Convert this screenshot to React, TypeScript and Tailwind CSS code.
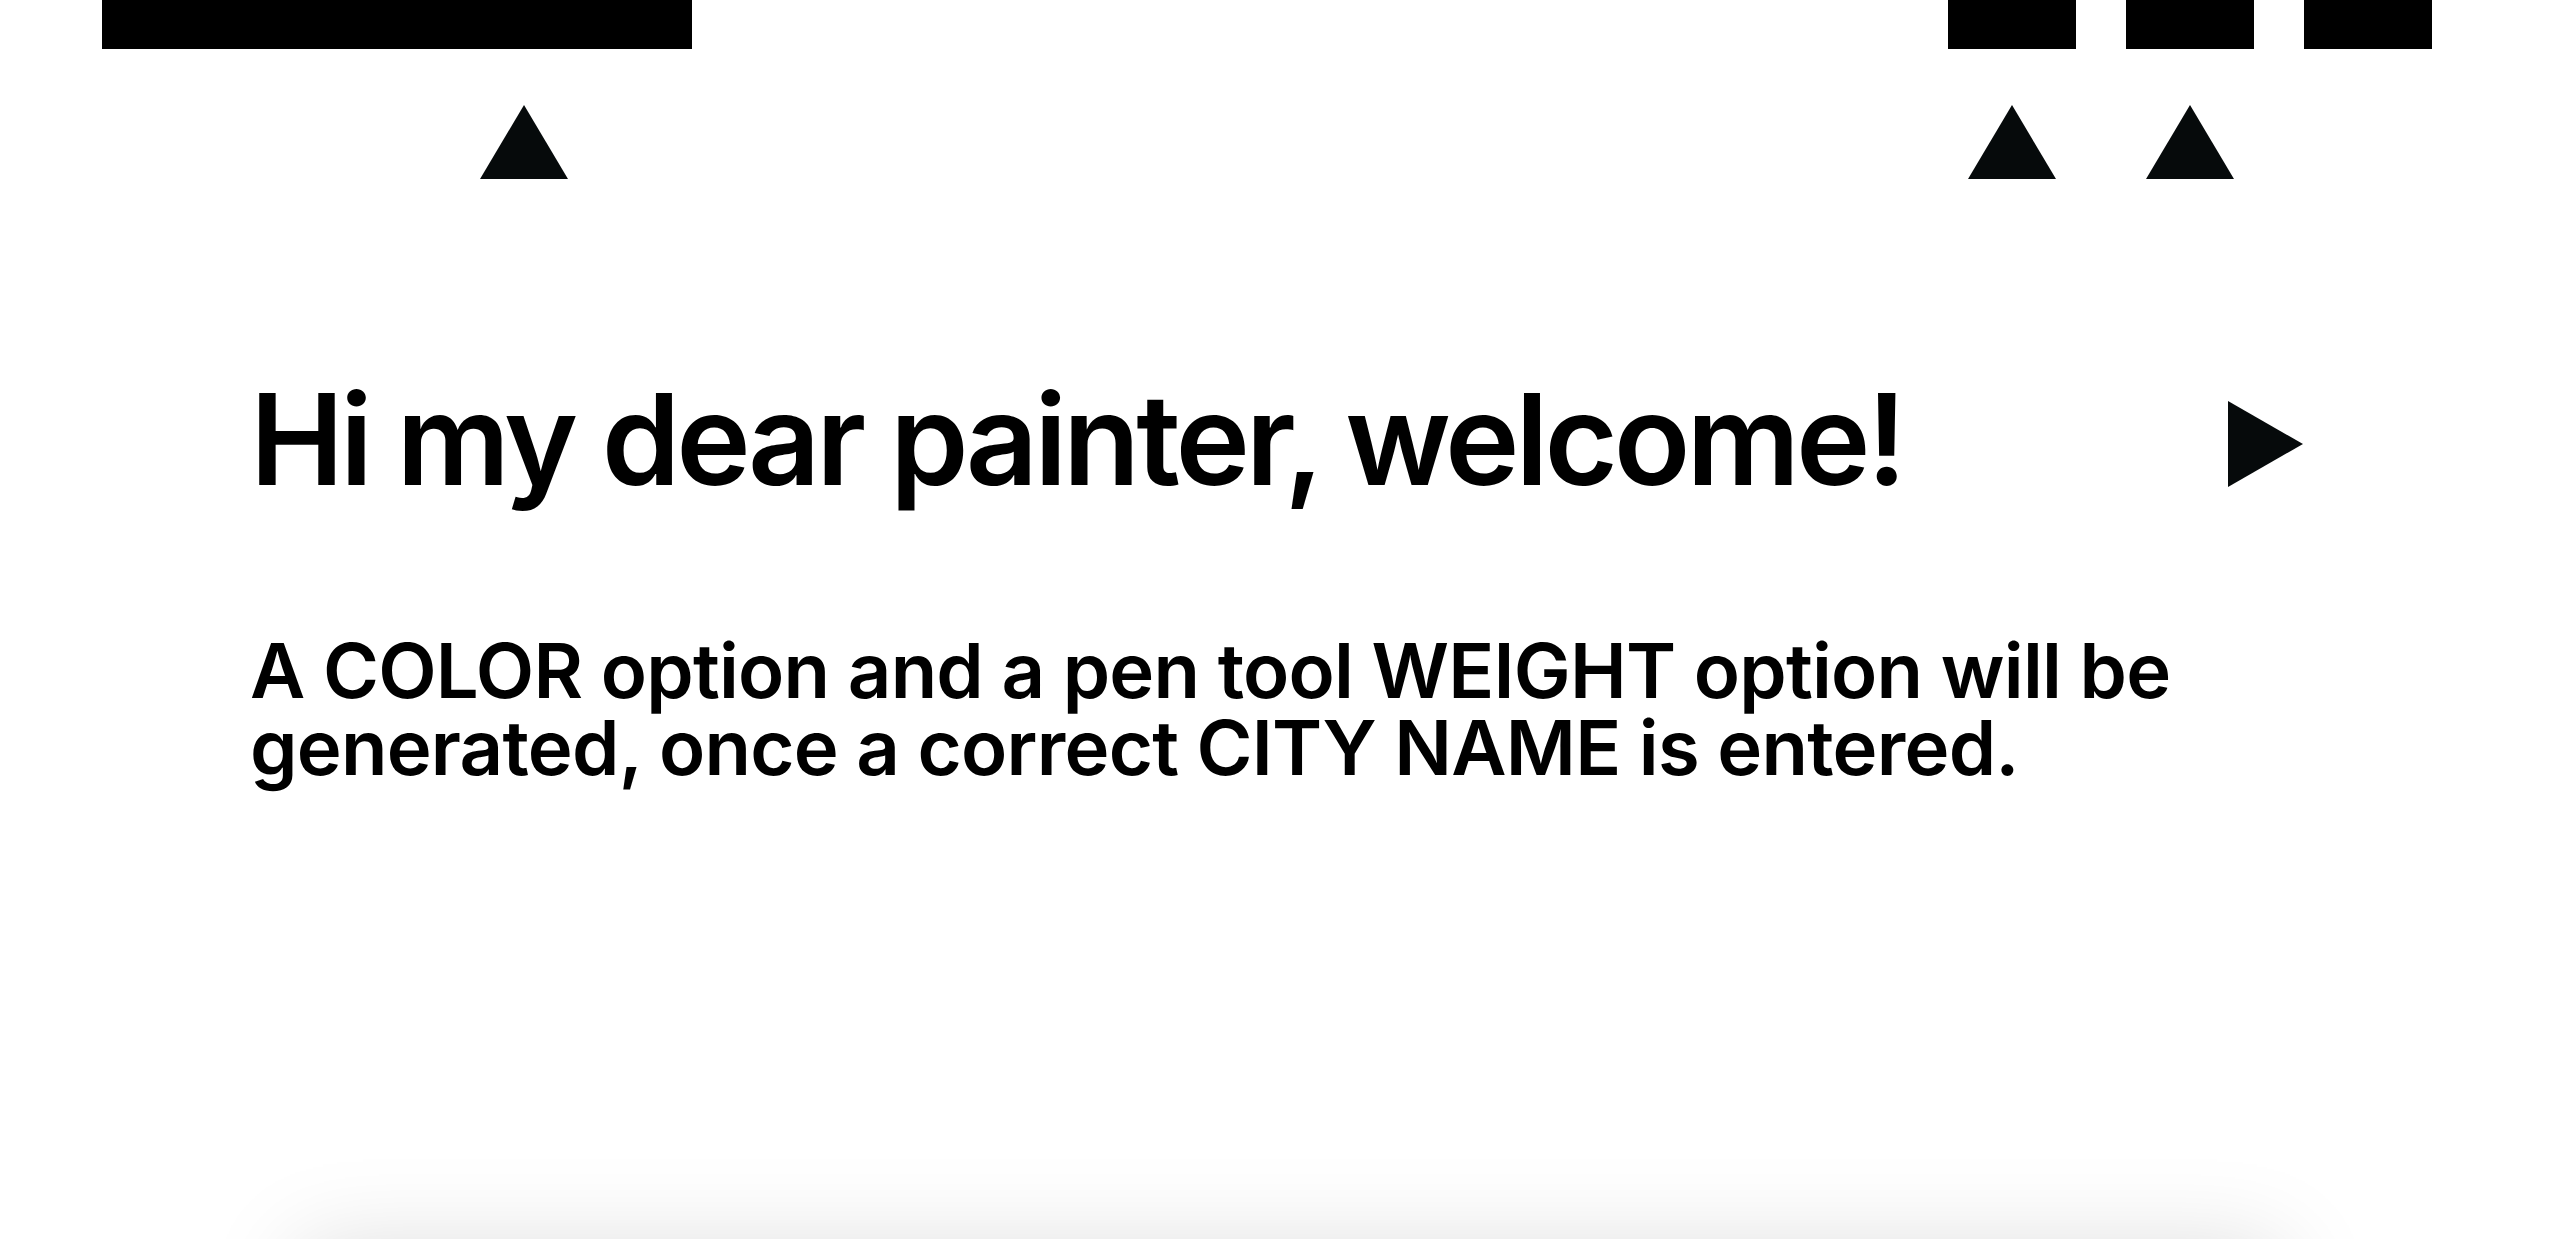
import React from "react";

// Small triangle markers used under the top bars and next to the heading
const TriangleUp: React.FC = () => (
  <svg width="88" height="74" viewBox="0 0 88 74" className="block">
    <polygon points="44,0 88,74 0,74" fill="#060a0b" />
  </svg>
);

const TriangleRight: React.FC = () => (
  <svg width="75" height="86" viewBox="0 0 75 86" className="block">
    <polygon points="0,0 75,43 0,86" fill="#060a0b" />
  </svg>
);

const App: React.FC = () => {
  const rightBars = [true, true, false];

  return (
    <div
      className="h-[1239px] overflow-hidden bg-white text-black"
      style={{ fontFamily: "Inter, 'Liberation Sans', sans-serif" }}
    >
      {/* Top nav bars */}
      <div className="flex justify-between pl-[102px] pr-[128px]">
        <div className="w-[590px]">
          <div className="h-[49px] bg-black" />
          <div className="mt-[56px] pl-[378px]">
            <TriangleUp />
          </div>
        </div>

        <div className="flex gap-[50px]">
          {rightBars.map((hasTriangle, i) => (
            <div key={i} className="flex w-[128px] flex-col items-center">
              <div className="h-[49px] w-full bg-black" />
              {hasTriangle && (
                <div className="mt-[56px]">
                  <TriangleUp />
                </div>
              )}
            </div>
          ))}
        </div>
      </div>

      {/* Welcome heading */}
      <div className="mt-[197px] flex items-center justify-between pl-[250px] pr-[257px]">
        <h1 className="text-[126px] font-semibold leading-none tracking-[-0.032em]">
          Hi my dear painter, welcome!
        </h1>
        <div className="mt-[10px]">
          <TriangleRight />
        </div>
      </div>

      {/* Intro text */}
      <p className="mt-[130px] pl-[250px] text-[76px] font-semibold leading-[77px] tracking-[-0.01em]">
        A COLOR option and a pen tool WEIGHT option will be
        <br />
        generated, once a correct CITY NAME is entered.
      </p>

      {/* Card peeking from below the fold */}
      <div className="ml-[300px] mr-[280px] mt-[464px] h-[600px] bg-white shadow-[0_0_90px_rgba(0,0,0,0.15)]" />
    </div>
  );
};

export default App;
